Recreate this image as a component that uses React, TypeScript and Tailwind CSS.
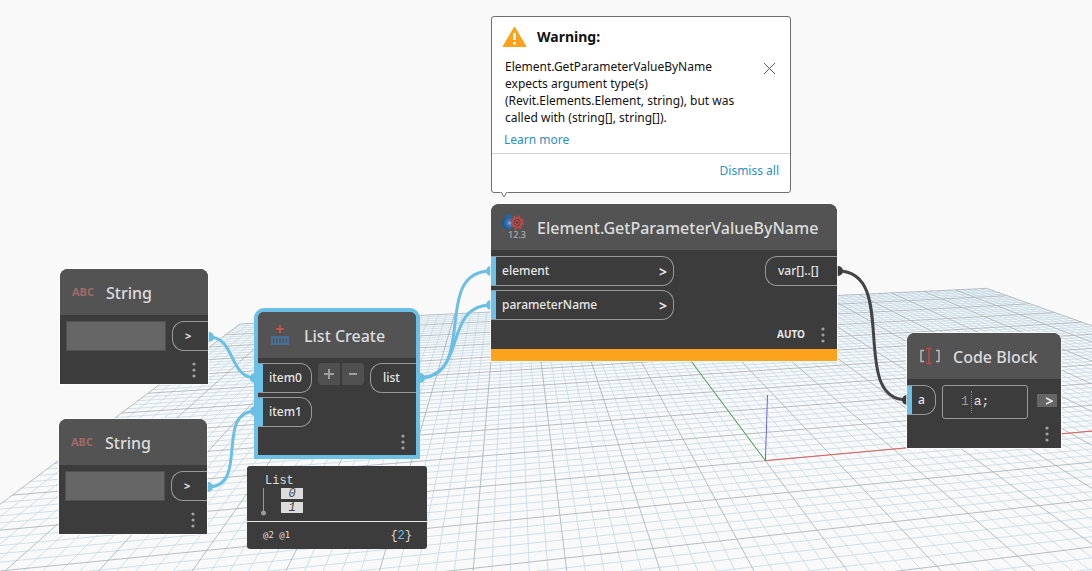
import type { ReactNode } from 'react'
import { X } from 'lucide-react'

// ground plane projection: screen position of the origin and the two vanishing points
const ORIGIN = [765.4, 460.7]
const VANISH_X = [4519, 120]
const VANISH_Y = [511.4, 120]
const STEP_X = 0.00353
const STEP_Y = 0.01694

function project(x: number, y: number) {
  const a = x * STEP_X
  const b = y * STEP_Y
  const w = 1 + a + b
  const px = (ORIGIN[0] + a * VANISH_X[0] + b * VANISH_Y[0]) / w
  const py = (ORIGIN[1] + a * VANISH_X[1] + b * VANISH_Y[1]) / w
  return `${px.toFixed(1)} ${py.toFixed(1)}`
}

function gridPath(major: boolean) {
  let d = ''
  for (let i = -50; i <= 50; i++) {
    if ((i % 5 === 0) !== major) continue
    d += `M${project(i, -35)}L${project(i, 50)}`
    if (i >= -35) d += `M${project(-50, i)}L${project(50, i)}`
  }
  return d
}

const MINOR = gridPath(false)
const MAJOR = gridPath(true)

function Ground() {
  return (
    <svg width="1092" height="571" className="absolute left-0 top-0 overflow-visible" fill="none" aria-hidden="true">
      <path d={MINOR} stroke="#c4dae6" strokeOpacity="0.8" />
      <path d={MAJOR} stroke="#a3afb8" strokeOpacity="0.8" />
      <path d={`M${project(0, 0)}L${project(0, 50)}`} stroke="#4ba04b" />
      <path d={`M${project(0, 0)}L${project(50, 0)}`} stroke="#e06060" />
      <path d="M765.4 460.7L767.5 395" stroke="#6464dc" />
    </svg>
  )
}

function Wires() {
  return (
    <svg width="1092" height="571" className="absolute left-0 top-0 overflow-visible" fill="none" aria-hidden="true">
      <g stroke="#6cbfe4" strokeWidth="3">
        <path d="M209 337C236 337 228 378 256 378" />
        <path d="M208 487C250 487 214 411 256 411" />
        <path d="M418 378C480 378 430 271 491 271" />
        <path d="M418 378C468 378 442 305 491 305" />
      </g>
      <g fill="#6cbfe4">
        <circle cx="209" cy="337" r="5" />
        <circle cx="208" cy="487" r="5" />
        <circle cx="255" cy="378" r="5" />
        <circle cx="255" cy="411" r="5" />
        <circle cx="420" cy="378" r="5" />
        <circle cx="491" cy="271" r="5" />
        <circle cx="491" cy="305" r="5" />
      </g>
      <path d="M838 271C900 271 848 400 907 400" stroke="#444" strokeWidth="3" />
      <circle cx="838" cy="271" r="5" fill="#3c3c3c" />
      <circle cx="907" cy="400" r="5" fill="#3c3c3c" />
    </svg>
  )
}

function Dots() {
  return (
    <button type="button" aria-label="Node options" className="block">
      <svg width="4" height="16" fill="#a0a0a0">
        <circle cx="2" cy="2" r="1.6" />
        <circle cx="2" cy="8" r="1.6" />
        <circle cx="2" cy="14" r="1.6" />
      </svg>
    </button>
  )
}

function Chevron() {
  return (
    <svg width="8" height="8" viewBox="0 0 8 8" fill="none" stroke="#e6e6e6" strokeWidth="1.6" aria-hidden="true">
      <path d="M1 1l6 3-6 3" />
    </svg>
  )
}

function Header({ icon, title }: { icon: ReactNode; title: string }) {
  return (
    <header className="flex h-[46px] items-center bg-[#535353] pl-2.5">
      <span className="flex w-9 shrink-0 items-center">{icon}</span>
      <h2 className="pt-0.5 text-[16px] leading-6 text-[#dcdcdc]">{title}</h2>
    </header>
  )
}

function InPort({ label, className = '', chevron }: { label: string; className?: string; chevron?: boolean }) {
  return (
    <div className={`flex h-[30px] items-center justify-between rounded-r-[12px] border border-l-0 border-[#999] pr-1.5 ${className}`}>
      <span className="mr-1.5 h-[28px] w-[5px] bg-[#6ac0e7]" />
      <span className="flex-1">{label}</span>
      {chevron && <span className="text-[14px] font-bold">&gt;</span>}
    </div>
  )
}

function OutPort({ children, className = '' }: { children: ReactNode; className?: string }) {
  return (
    <div className={`flex h-[30px] items-center rounded-l-[12px] border border-r-0 border-[#999] ${className}`}>
      {children}
    </div>
  )
}

const NODE = 'absolute overflow-hidden rounded-t-lg bg-[#3c3c3c] text-[12px] font-medium text-[#e6e6e6] ring-1 ring-white/70'

function StringNode({ id, className }: { id: string; className: string }) {
  return (
    <section className={`${NODE} w-[148px] ${className}`}>
      <Header icon={<span className="pl-0.5 text-[11px] font-bold text-[#a06a6a]">ABC</span>} title="String" />
      <div className="flex h-[69px] flex-col justify-between pb-1.5 pt-1.5">
        <div className="flex items-start justify-between pl-1.5">
          <input id={id} aria-label="String value" className="h-[30px] w-[100px] border border-[#505050] bg-[#666] px-1 outline-none" />
          <OutPort className="w-9 pl-3 text-[11px] font-bold">&gt;</OutPort>
        </div>
        <div className="flex justify-end pr-3">
          <Dots />
        </div>
      </div>
    </section>
  )
}

function ListIcon() {
  return (
    <svg width="20" height="22" viewBox="0 0 20 22" fill="none" className="ml-0.5">
      <path d="M10 1v8M6 5h8" stroke="#c0504f" strokeWidth="2" />
      <path d="M2 13h16v7H2zM5.2 13v7M8.4 13v7M11.6 13v7M14.8 13v7" stroke="#4478a8" strokeWidth="1.5" />
    </svg>
  )
}

function ListNode() {
  return (
    <section className="absolute left-[254px] top-[308px] w-[166px] overflow-hidden rounded-t-[10px] border-4 border-[#6ac0e7] bg-[#3c3c3c] text-[12px] font-medium text-[#e6e6e6]">
      <Header icon={<ListIcon />} title="List Create" />
      <div className="flex justify-between pt-[5px]">
        <div className="flex flex-col gap-1">
          <InPort label="item0" className="w-[54px]" />
          <InPort label="item1" className="w-[54px]" />
        </div>
        <div className="flex gap-0.5 text-[#a0a0a0]">
          <button type="button" aria-label="Add item" className="flex h-[22px] w-[22px] items-center justify-center rounded-l bg-[#505050]">
            <svg width="12" height="12" stroke="currentColor" strokeWidth="2"><path d="M6 1v10M1 6h10" /></svg>
          </button>
          <button type="button" aria-label="Remove item" className="flex h-[22px] w-[22px] items-center justify-center rounded-r bg-[#505050]">
            <svg width="12" height="12" stroke="currentColor" strokeWidth="2"><path d="M2 6h8" /></svg>
          </button>
        </div>
        <OutPort className="w-[46px] pl-3">list</OutPort>
      </div>
      <div className="flex justify-end pb-[5px] pr-[11px] pt-[7px]">
        <Dots />
      </div>
    </section>
  )
}

function ElementIcon() {
  return (
    <svg width="26" height="26" viewBox="0 0 26 26" fill="none">
      <defs>
        <radialGradient id="sphere" cx="0.65" cy="0.5" r="0.6">
          <stop offset="0" stopColor="#7fc0ea" />
          <stop offset="0.4" stopColor="#2f78b8" />
          <stop offset="1" stopColor="#1d5794" />
        </radialGradient>
      </defs>
      <path d="M5 .5h5.500l1 4.500H4z" fill="#2b659c" />
      <circle cx="7" cy="9" r="6" fill="url(#sphere)" />
      <circle cx="16" cy="8.500" r="4.600" fill="#5b4141" stroke="#b84a48" strokeWidth="2.400" />
      <circle cx="16" cy="8.500" r="6.300" stroke="#b84a48" strokeWidth="1.600" strokeDasharray="2.400 2.550" />
      <circle cx="16" cy="8.500" r="2" fill="#7f2f30" stroke="#c95a58" />
      <text x="7" y="24" fontSize="9" fill="#b0b0b0">12.3</text>
    </svg>
  )
}

function ElementNode() {
  return (
    <section className={`${NODE} left-[491px] top-[204px] w-[346px]`}>
      <Header icon={<ElementIcon />} title="Element.GetParameterValueByName" />
      <div className="flex justify-between pt-1.5">
        <div className="flex flex-col gap-1">
          <InPort label="element" className="w-[183px]" chevron />
          <InPort label="parameterName" className="w-[183px]" chevron />
        </div>
        <OutPort className="w-[72px] pl-3">var[]..[]</OutPort>
      </div>
      <div className="flex h-[29px] items-center justify-end gap-4 pr-3">
        <span className="text-[10px] font-bold">AUTO</span>
        <Dots />
      </div>
      <div className="h-3 bg-[#fba31c]" />
    </section>
  )
}

function CodeIcon() {
  return (
    <svg width="24" height="18" viewBox="0 0 24 18" fill="none" className="ml-0.5">
      <path d="M5 3.500H2v11h3M17 3.500h3v11h-3" stroke="#b8b8b8" strokeWidth="1.500" />
      <path d="M7 1.500h6M7 16.500h6M10 1v16" stroke="#a84a47" strokeWidth="2" />
    </svg>
  )
}

function CodeNode() {
  return (
    <section className={`${NODE} left-[907px] top-[333px] w-[154px]`}>
      <Header icon={<CodeIcon />} title="Code Block" />
      <div className="flex h-[69px] flex-col justify-between pb-1.5 pt-1.5">
        <div className="flex items-start">
          <InPort label="a" className="w-[29px]" />
          <div className="ml-1.5 flex h-[34px] w-[86px] items-center rounded-[3px] border border-[#999] pl-[18px] font-['Liberation_Mono',monospace] text-[13px]">
            <span className="text-[#999]">1</span>
            <label className="ml-0.5 flex h-[22px] items-center border-l border-dotted border-[#888] pl-0.5">
              <input aria-label="Code" defaultValue="a;" className="w-10 bg-transparent text-[13px] text-[#e0e0e0] outline-none" />
            </label>
          </div>
          <span className="ml-[9px] mt-[9px] flex h-[13px] w-5 items-center justify-center bg-[#666] pl-1">
            <Chevron />
          </span>
        </div>
        <div className="-mt-1 flex justify-end pr-3">
          <Dots />
        </div>
      </div>
    </section>
  )
}

function Preview() {
  return (
    <section className="absolute left-[247px] top-[466px] w-[180px] rounded-[3px] bg-[#3c3c3c] font-['Liberation_Mono',monospace] text-[12px] text-[#dcdcdc]">
      <div className="h-[55px] pl-[14px] pt-2">
        <p className="pl-1 leading-[14px]">List</p>
        <div className="flex">
          <svg width="6" height="30" fill="#999">
            <path d="M2 0h1v25H2z" />
            <circle cx="2.500" cy="25" r="2.500" />
          </svg>
          <ul className="ml-[14px] flex flex-col gap-[3px] text-center italic leading-[13px] text-[#444]">
            <li className="h-[11px] w-[22px] bg-[#dcdcdc]">0</li>
            <li className="h-[11px] w-[22px] bg-[#dcdcdc]">1</li>
          </ul>
        </div>
      </div>
      <div className="flex h-7 items-center justify-between border-t border-[#e8e8e8] pl-4 pr-[15px]">
        <span className="font-['DejaVu_Sans_Mono',monospace] text-[9px]">@2 @1</span>
        <span>{'{'}<span className="text-[#6ac0e7]">2</span>{'}'}</span>
      </div>
    </section>
  )
}

function Warning() {
  return (
    <aside className="absolute left-[491px] top-4 w-[300px] rounded-[3px] border border-[#6e6e6e] bg-white text-[12px] text-[#111]">
      <div className="flex items-center gap-2.5 pl-2.5 pt-[9px]">
        <svg width="25" height="22" viewBox="0 0 25 22">
          <path d="M12.500 1L24 20.500H1z" fill="#faa21b" stroke="#faa21b" strokeLinejoin="round" />
          <path d="M12.500 7v7M12.500 16v2.400" stroke="#fff" strokeWidth="2.600" />
        </svg>
        <h3 className="text-[14px] font-bold leading-[22px]">Warning:</h3>
      </div>
      <div className="flex items-start justify-between pl-[13px] pr-2.5 pt-2.5">
        <p className="w-[242px] leading-[17px]">
          Element.GetParameterValueByName expects argument type(s) (Revit.Elements.Element, string), but was called with (string[], string[]).
        </p>
        <button type="button" aria-label="Close" className="text-[#555]">
          <X size={21} strokeWidth={1.1} />
        </button>
      </div>
      <a href="#learn" className="ml-3 mt-1 block leading-[19px] text-[#2a90c5]">Learn more</a>
      <div className="mt-1 flex h-[39px] items-center justify-end border-t border-[#d0d0d0] pb-1 pr-[11px]">
        <button type="button" className="text-[#2a90c5]">Dismiss all</button>
      </div>
      <svg width="8" height="6" className="absolute left-2 top-full" fill="none">
        <path d="M0 0h8L4 5z" fill="#fff" />
        <path d="M1 0l3 5 3-5" stroke="#6e6e6e" />
      </svg>
    </aside>
  )
}

export default function App() {
  return (
    <main className="relative h-screen w-full overflow-hidden bg-[#f9f9f9] font-['Noto_Sans',sans-serif]">
      <Ground />
      <Wires />
      <StringNode id="string-a" className="left-[60px] top-[269px]" />
      <StringNode id="string-b" className="left-[59px] top-[419px]" />
      <ListNode />
      <Preview />
      <ElementNode />
      <CodeNode />
      <Warning />
    </main>
  )
}
